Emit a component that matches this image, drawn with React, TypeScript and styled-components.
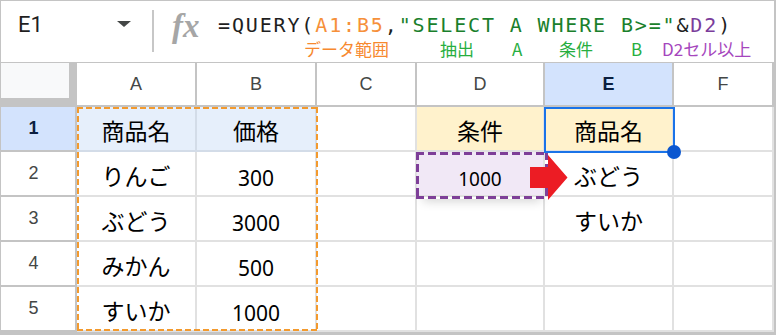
import React from "react";
import styled, { createGlobalStyle } from "styled-components";

const Global = createGlobalStyle`
  html, body { margin: 0; padding: 0; background: #fff; }
  body { width: 776px; height: 335px; overflow: hidden; }
`;

const Frame = styled.div`
  box-sizing: border-box;
  width: 776px;
  height: 335px;
  border: 1px solid #c4c4c4;
  border-right-width: 2px;
  border-bottom-width: 3px;
  display: flex;
  flex-direction: column;
  background: #fff;
  overflow: hidden;
`;

const FormulaBar = styled.div`
  box-sizing: border-box;
  height: 62px;
  flex: none;
  border-bottom: 1px solid #c4c4c4;
  display: flex;
  align-items: flex-start;
`;

const NameBox = styled.div`
  box-sizing: border-box;
  width: 151px;
  height: 61px;
  padding: 12px 21px 0 17px;
  display: flex;
  align-items: flex-start;
  font-family: Roboto, "Liberation Sans", sans-serif;
  font-size: 22px;
  line-height: 24px;
  color: #1f1f1f;
`;

const Caret = styled.span`
  margin-left: auto;
  margin-top: 8px;
  width: 0;
  height: 0;
  border-left: 7.5px solid transparent;
  border-right: 7.5px solid transparent;
  border-top: 6px solid #444746;
`;

const Divider = styled.div`
  width: 2px;
  height: 42px;
  margin-top: 9px;
  background: #c7c7c7;
  flex: none;
`;

const Fx = styled.div`
  width: 27px;
  margin-left: 18px;
  margin-top: 10px;
  font-family: "Liberation Serif", serif;
  font-style: italic;
  font-weight: bold;
  font-size: 33px;
  line-height: 30px;
  color: #a6a6a6;
  white-space: nowrap;
`;

const FormulaArea = styled.div`
  margin-left: 19px;
  display: flex;
  flex-direction: column;
`;

const FormulaText = styled.div`
  margin-top: 12px;
  font-family: "DejaVu Sans Mono", "Liberation Mono", monospace;
  font-size: 20px;
  line-height: 24px;
  letter-spacing: 1.85px;
  color: #1f1f1f;
  white-space: pre;
`;

const Tok = styled.span<{ $c: string }>`
  color: ${(p) => p.$c};
`;

const Notes = styled.div`
  margin-top: 3px;
  padding-left: 86px;
  display: grid;
  grid-template-columns: 136px 72px 47px 72px 31px auto;
  font-family: "Noto Sans CJK JP", sans-serif;
  font-size: 17px;
  line-height: 17px;
  white-space: nowrap;
`;

const Note = styled.span<{ $c: string }>`
  color: ${(p) => p.$c};
`;

const Sheet = styled.div`
  position: relative;
  flex: 1;
  display: grid;
  grid-template-columns: 76px 120px 120px 100px 128px 129px 1fr;
  grid-template-rows: 44px repeat(5, 45px);
`;

const Corner = styled.div`
  box-sizing: border-box;
  background: #f8f9fa;
  border-right: 8px solid #c4c4c4;
  border-bottom: 9px solid #c4c4c4;
`;

const ColHeader = styled.div<{ $active?: boolean }>`
  box-sizing: border-box;
  display: flex;
  align-items: center;
  justify-content: center;
  background: ${(p) => (p.$active ? "#d3e3fd" : "#fff")};
  border-right: 2px solid #c4c4c4;
  border-bottom: 2px solid #c4c4c4;
  font-family: "Liberation Sans", Arial, sans-serif;
  font-size: 18px;
  font-weight: ${(p) => (p.$active ? 700 : 400)};
  color: ${(p) => (p.$active ? "#0b1f3f" : "#444746")};
`;

const RowHeader = styled.div<{ $active?: boolean }>`
  box-sizing: border-box;
  display: flex;
  align-items: center;
  justify-content: center;
  padding-right: 9px;
  background: ${(p) => (p.$active ? "#d3e3fd" : "#fff")};
  border-right: 2px solid #c4c4c4;
  border-bottom: 2px solid #c4c4c4;
  font-family: "Liberation Sans", Arial, sans-serif;
  font-size: 18px;
  font-weight: ${(p) => (p.$active ? 700 : 400)};
  color: ${(p) => (p.$active ? "#0b1f3f" : "#444746")};
`;

const Cell = styled.div<{ $bg?: string; $line?: string; $num?: boolean; $size?: number; $pad?: number }>`
  box-sizing: border-box;
  display: flex;
  align-items: center;
  justify-content: center;
  background: ${(p) => p.$bg || "#fff"};
  border-right: 2px solid ${(p) => p.$line || "#e1e1e1"};
  border-bottom: 2px solid ${(p) => p.$line || "#e1e1e1"};
  padding-top: ${(p) => p.$pad ?? (p.$num ? 10 : 4)}px;
  font-family: ${(p) => (p.$num ? `"Noto Sans", "Liberation Sans", sans-serif` : `"Noto Sans CJK JP", sans-serif`)};
  font-size: ${(p) => p.$size ?? (p.$num ? 21 : 23)}px;
  line-height: 1;
  color: #000;
  white-space: nowrap;
`;

const dash = (c: string, w: number, on: number, off: number) => `
  background:
    repeating-linear-gradient(90deg, ${c} 0 ${on}px, transparent ${on}px ${on + off}px) top left / 100% ${w}px no-repeat,
    repeating-linear-gradient(90deg, ${c} 0 ${on}px, transparent ${on}px ${on + off}px) bottom left / 100% ${w}px no-repeat,
    repeating-linear-gradient(180deg, ${c} 0 ${on}px, transparent ${on}px ${on + off}px) top left / ${w}px 100% no-repeat,
    repeating-linear-gradient(180deg, ${c} 0 ${on}px, transparent ${on}px ${on + off}px) top right / ${w}px 100% no-repeat;
`;

const RangeMarquee = styled.div`
  position: absolute;
  left: 76px;
  top: 44px;
  width: 241px;
  height: 224px;
  pointer-events: none;
  ${dash("#f39a2e", 2, 6, 3)}
`;

const CondMarquee = styled.div`
  position: absolute;
  left: 415px;
  top: 89px;
  width: 132px;
  height: 47px;
  pointer-events: none;
  box-shadow: 0 9px 10px -7px rgba(0, 0, 0, 0.18);
  ${dash("#7e3f98", 3, 8, 4)}
`;

const Selection = styled.div`
  position: absolute;
  box-sizing: border-box;
  left: 543px;
  top: 44px;
  width: 131px;
  height: 46px;
  border: 2px solid #1a73e8;
  pointer-events: none;
`;

const Handle = styled.span`
  position: absolute;
  right: -8px;
  bottom: -8px;
  width: 14px;
  height: 14px;
  border-radius: 50%;
  background: #0b57d0;
`;

const Arrow = styled.svg`
  position: absolute;
  left: 529px;
  top: 92px;
`;

const cols = ["A", "B", "C", "D", "E", "F"];

export default function App() {
  const hdrBlue = "#e6effb";
  const hdrLine = "#d3dce8";
  const yellow = "#fff2cc";
  const rows: { a: string; b: string; d?: string; e?: string }[] = [
    { a: "りんご", b: "300", d: "1000", e: "ぶどう" },
    { a: "ぶどう", b: "3000", e: "すいか" },
    { a: "みかん", b: "500" },
    { a: "すいか", b: "1000" },
  ];
  return (
    <>
      <Global />
      <Frame>
        <FormulaBar>
          <NameBox>
            E1
            <Caret />
          </NameBox>
          <Divider />
          <Fx>fx</Fx>
          <FormulaArea>
            <FormulaText>
              <Tok $c="#1f1f1f">=QUERY(</Tok>
              <Tok $c="#f6903a">A1:B5</Tok>
              <Tok $c="#1f1f1f">,</Tok>
              <Tok $c="#1a7f2c">"SELECT A WHERE B&gt;="</Tok>
              <Tok $c="#1f1f1f">&amp;</Tok>
              <Tok $c="#7b3d9b">D2</Tok>
              <Tok $c="#1f1f1f">)</Tok>
            </FormulaText>
            <Notes>
              <Note $c="#f7892f">データ範囲</Note>
              <Note $c="#27ae3f">抽出</Note>
              <Note $c="#27ae3f">A</Note>
              <Note $c="#27ae3f">条件</Note>
              <Note $c="#27ae3f">B</Note>
              <Note $c="#a546bd">D2セル以上</Note>
            </Notes>
          </FormulaArea>
        </FormulaBar>
        <Sheet>
          <Corner />
          {cols.map((c) => (
            <ColHeader key={c} $active={c === "E"}>
              {c}
            </ColHeader>
          ))}

          <RowHeader $active>1</RowHeader>
          <Cell $bg={hdrBlue} $line={hdrLine}>商品名</Cell>
          <Cell $bg={hdrBlue} $line={hdrLine}>価格</Cell>
          <Cell />
          <Cell $bg={yellow}>条件</Cell>
          <Cell $bg={yellow}>商品名</Cell>
          <Cell />

          {rows.map((r, i) => (
            <React.Fragment key={i}>
              <RowHeader>{i + 2}</RowHeader>
              <Cell>{r.a}</Cell>
              <Cell $num>{r.b}</Cell>
              <Cell />
              {r.d ? (
                <Cell $num $bg="#f1e8f6" $size={19} $pad={12}>
                  {r.d}
                </Cell>
              ) : (
                <Cell />
              )}
              <Cell>{r.e || ""}</Cell>
              <Cell />
            </React.Fragment>
          ))}

          <RangeMarquee />
          <CondMarquee />
          <Selection>
            <Handle />
          </Selection>
          <Arrow width="38" height="45" viewBox="0 0 38 45">
            <polygon points="0,12 18,12 18,0 37.5,22.5 18,45 18,33 0,33" fill="#ec1c24" />
          </Arrow>
        </Sheet>
      </Frame>
    </>
  );
}
